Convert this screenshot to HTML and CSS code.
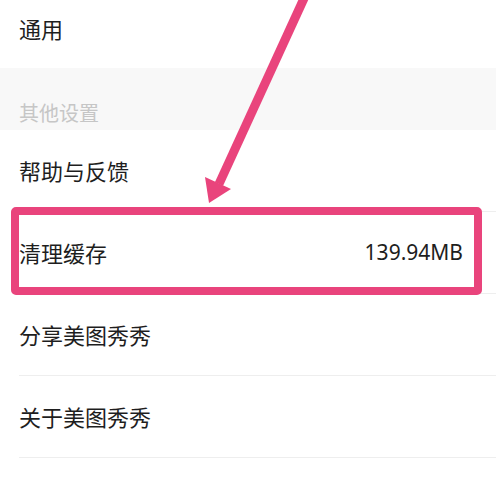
FILE: index.html
```html
<!DOCTYPE html>
<html lang="zh-CN">
<head>
<meta charset="utf-8">
<link rel="stylesheet" href="styles.css">
</head>
<body>
<div class="page">
  <div class="row row-top"><span class="label">通用</span></div>
  <div class="section"><span class="section-title">其他设置</span></div>
  <div class="row"><div class="row-inner"><span class="label">帮助与反馈</span></div></div>
  <div class="row"><div class="row-inner"><span class="label">清理缓存</span><span class="value">139.94MB</span></div></div>
  <div class="row"><div class="row-inner"><span class="label">分享美图秀秀</span></div></div>
  <div class="row"><div class="row-inner"><span class="label">关于美图秀秀</span></div></div>
  <div class="highlight"></div>
  <svg class="arrow" width="496" height="484" viewBox="0 0 496 484">
    <line x1="306" y1="-6" x2="219" y2="184" stroke="#e9447c" stroke-width="9"/>
    <polygon points="209,203 205,177 231,189" fill="#e9447c"/>
  </svg>
</div>
</body>
</html>
```

FILE: styles.css
```css
* { box-sizing: border-box; }
html, body { margin: 0; padding: 0; background: #fff; }
.page {
  position: relative;
  width: 496px;
  height: 484px;
  overflow: hidden;
  font-family: "Noto Sans CJK SC", "Noto Sans", sans-serif;
  color: #1e1e1e;
}
.row-top {
  height: 68px;
  padding: 0 0 12px 19px;
  display: flex;
  align-items: center;
}
.section {
  height: 62px;
  background: #f8f8f8;
  padding: 0 0 3px 19px;
  display: flex;
  align-items: flex-end;
}
.section-title {
  font-size: 20px;
  line-height: 28px;
  color: #c6c6c6;
}
.row { padding-left: 19px; }
.row-inner {
  height: 82px;
  border-bottom: 1px solid #eeeeee;
  display: flex;
  align-items: center;
  justify-content: space-between;
  padding-right: 33px;
  padding-bottom: 2px;
}
.label {
  font-size: 22px;
  line-height: 30px;
}
.value {
  font-family: "Noto Sans", sans-serif;
  font-size: 21px;
  line-height: 30px;
  color: #1e1e1e;
}
.highlight {
  position: absolute;
  left: 11px;
  top: 207px;
  width: 471px;
  height: 88px;
  border: 8px solid #e9447c;
  border-radius: 5px;
}
.arrow {
  position: absolute;
  left: 0;
  top: 0;
  pointer-events: none;
}
```
